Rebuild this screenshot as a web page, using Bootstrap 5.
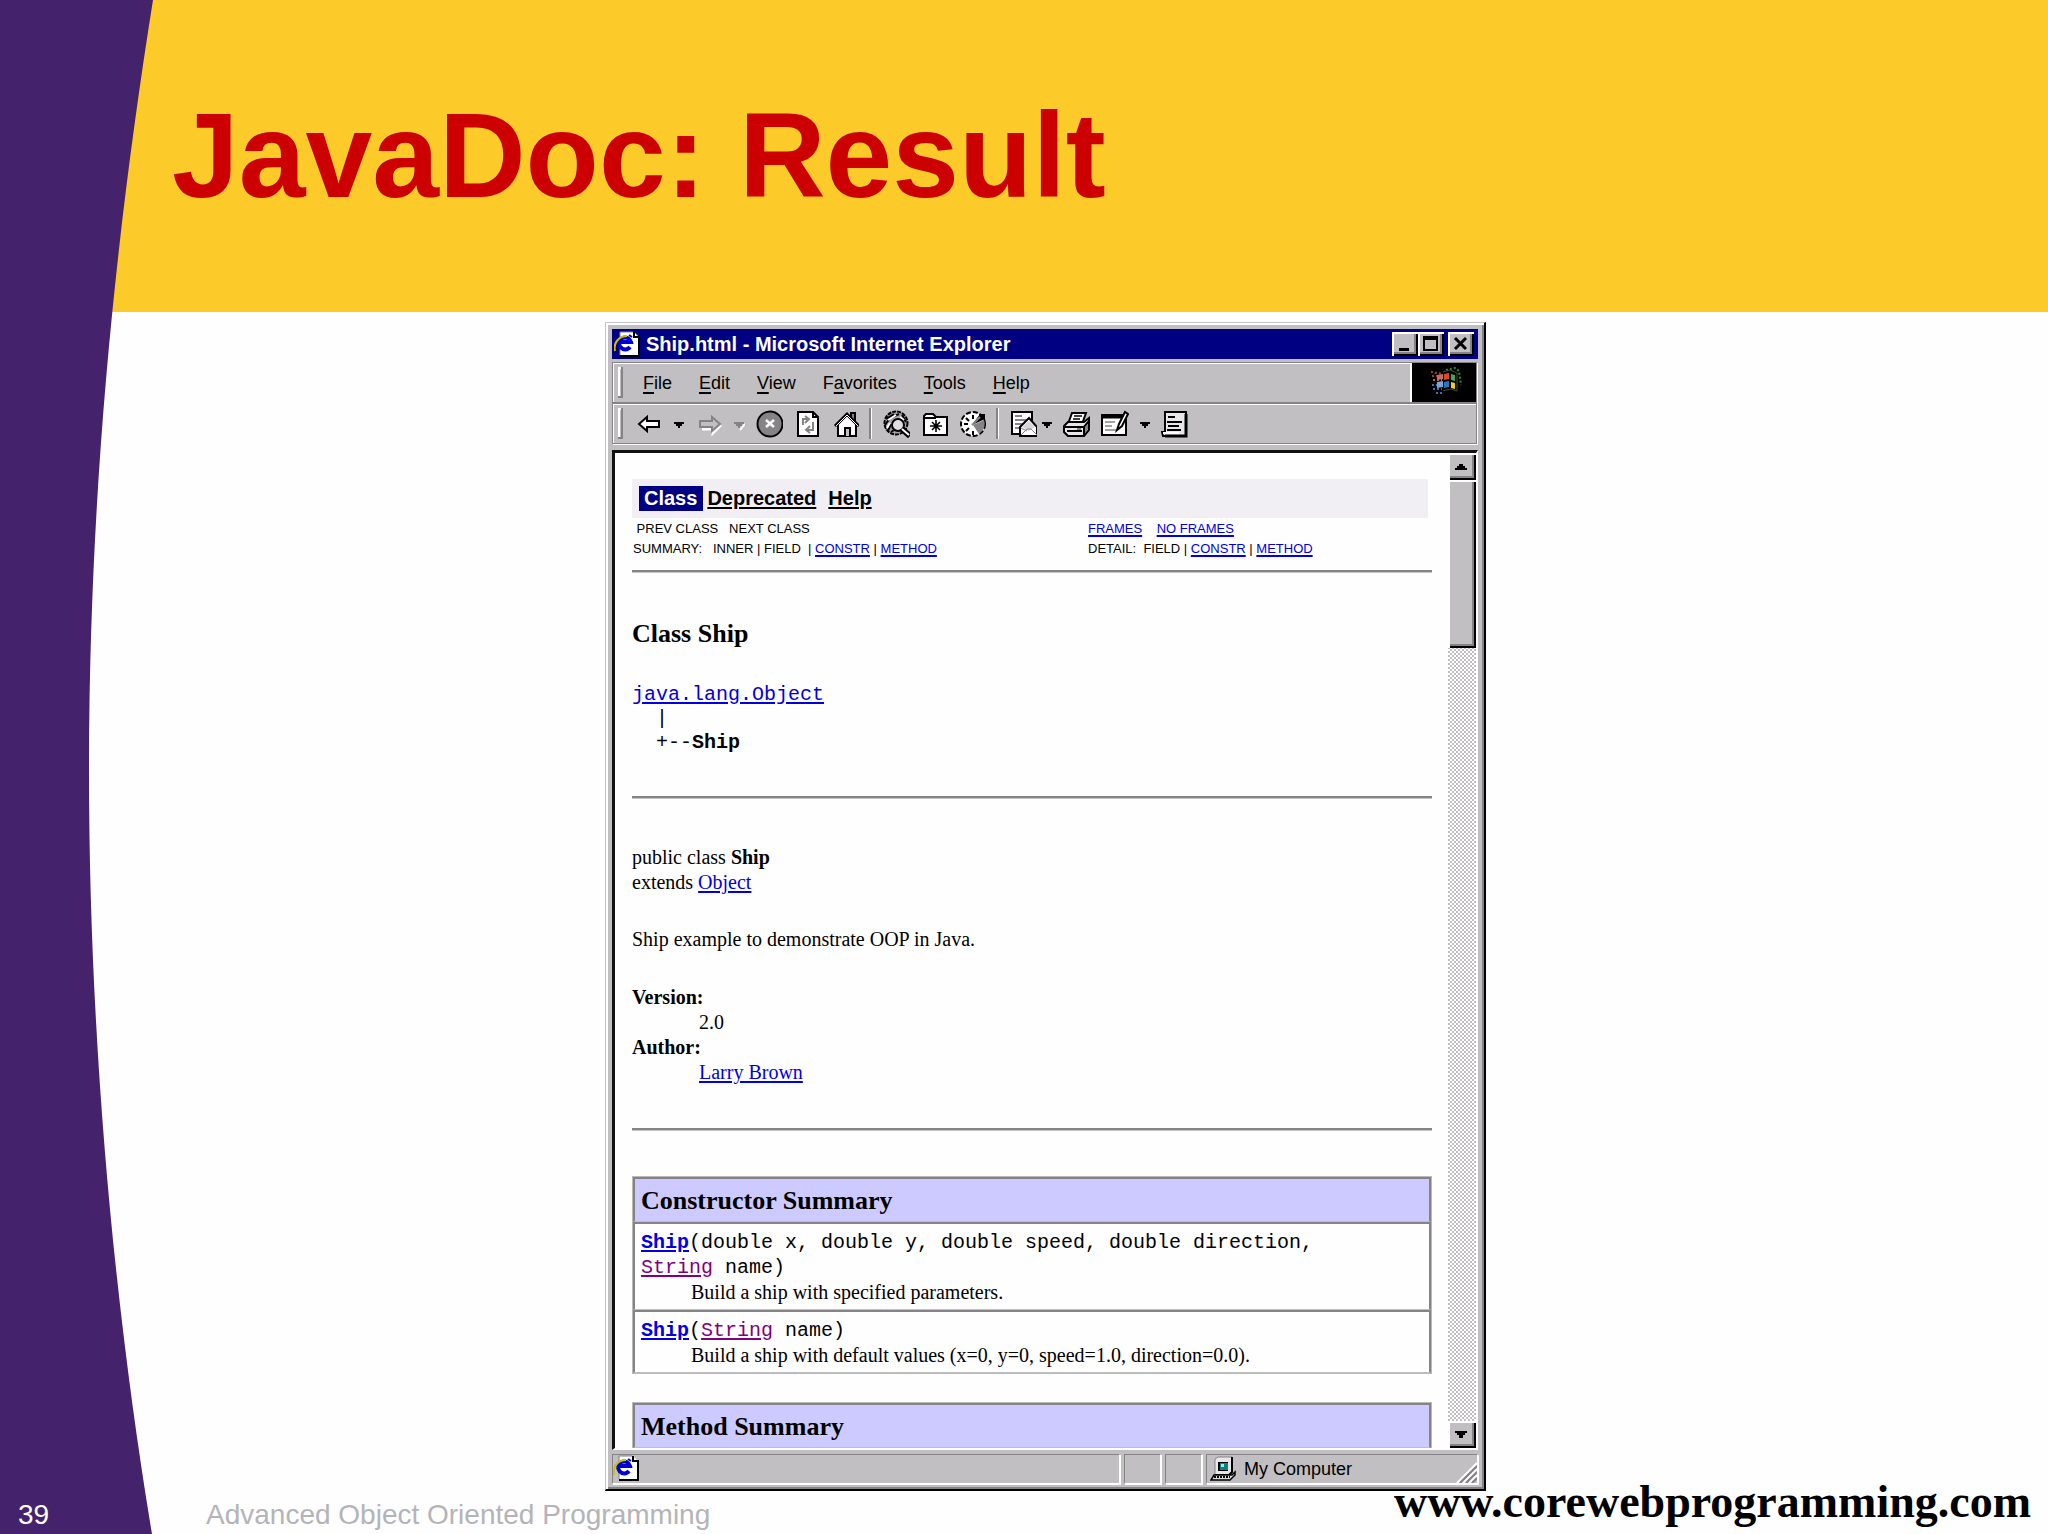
<!DOCTYPE html>
<html lang="en">
<head>
<meta charset="utf-8">
<meta name="viewport" content="width=device-width, initial-scale=1">
<title>JavaDoc: Result</title>
<link href="https://cdn.jsdelivr.net/npm/bootstrap@5.3.0/dist/css/bootstrap.min.css" rel="stylesheet">
<style>
  body { background: #fefefe; color: #000; font-family: "Liberation Sans", Arial, sans-serif; }
  .slide { height: 100vh; min-height: 900px; isolation: isolate; }
  .curve { position: absolute; left: 0; top: 0; width: 153px; height: 100%; z-index: -1; }
  .slide-head { background: #fccb2a; height: 312px; padding: 87px 172px 0; z-index: -2; }
  .slide-head h1 { color: #cc0000; font-size: 120px; line-height: 136px; font-weight: 700; }
  .slide-main { min-height: 0; padding: 10px 0 0 43px; }
  .slide-foot { height: 43px; padding: 0 17px 4px 18px; }
  .slide-no { color: #fff; width: 188px; font-size: 28px; line-height: 30px; }
  .course { color: #b4b4b8; font-size: 28px; line-height: 30px; }
  .site { font: 700 46px/22px "Liberation Serif", "Times New Roman", serif; color: #000; }

  /* window frame */
  .win { width: 100%; max-width: 881px; background: #c1bfc1; border: 1px solid #c4c2c4; border-right: 2px solid #000; border-bottom: 2px solid #000;
         box-shadow: inset 2px 2px #fff, inset -2px -2px #858385; padding: 6px 6px 5px 6px; color: #000; }
  .win-title { background: #000082; color: #fff; height: 30px; padding: 0 4px 0 2px; font-size: 20px; line-height: 30px; font-weight: 700; }
  .win-title span { margin-left: 6px; }
  .bevel { background: #c1bfc1; border: 0; padding: 0; box-shadow: inset 2px 2px #fff, inset -2px -2px #000, inset -4px -4px #858385; color: #000; line-height: 0; }
  .cap-btn { width: 26px; height: 24px; }
  .ie-bar { height: 41px; margin-right: 1px; border: 1px solid #858385; box-shadow: inset 1px 1px #fff, 1px 1px #fff; }
  .grip { width: 5px; height: 31px; margin-left: 5px; border: solid #858385; border-width: 0 2px 2px 0; box-shadow: inset 2px 2px #fff; }
  .menus { gap: 27px; margin-left: 20px; font-size: 18px; line-height: 38px; }
  .menus button, .tools button { background: none; border: 0; padding: 0; color: #000; line-height: inherit; }
  .menus u { text-underline-offset: 3px; text-decoration-thickness: 2px; }
  .tools { gap: 10px; margin-left: 12px; }
  .tools button, .tools svg { display: block; line-height: 0; }
  .divider { width: 3px; height: 31px; border-left: 2px solid #858385; border-right: 1px solid #fff; }

  /* document pane */
  .client { min-height: 0; margin-top: 6px; border: solid #fff; border-width: 3px 2px 2px 3px; border-top-color: #111; border-left-color: #111; background: #fefefe; }
  .doc { min-width: 0; overflow: hidden; padding: 26px 16px 0 17px; font: 20px/25px "Liberation Serif", "Times New Roman", serif; }
  .doc a { color: #0000e0; text-decoration: underline; text-underline-offset: 2px; text-decoration-thickness: 2px; }
  .doc a.seen { color: #800080; }
  .doc-nav { background: #f1eff3; height: 39px; margin-right: 4px; padding: 0 7px; font: 700 20px/25px "Liberation Sans", Arial, sans-serif; }
  .doc-nav a { color: #000; }
  .doc-nav .here { background: #000082; color: #fff; padding: 0 6px 0 5px; margin-right: 4px; }
  .doc-nav .dep { margin-right: 12px; }
  .sub-nav { font: 13px/20px "Liberation Sans", Arial, sans-serif; padding-top: 1px; }
  .sub-nav .side-a { width: 456px; padding-left: 1px; }
  .rule { height: 3px; margin: 0; border: 0; opacity: 1; background: linear-gradient(#858385 2px, #c6c6c6 2px); }
  .doc h2, .sum-table th { font-size: 26px; line-height: 30px; font-weight: 700; }
  .doc h2 { margin: 46px 0 34px; }
  .doc pre { font: 20px/24px "Liberation Mono", "Courier New", monospace; margin: 0 0 41px; overflow: visible; }
  .doc code { display: block; font: 20px/25px "Liberation Mono", "Courier New", monospace; color: #000; }
  .doc dd { margin: 0 0 0 67px; }
  .doc dl { margin: 33px 0 43px; }
  .sum-table { width: 100%; border: 1px solid #b9b9b9; border-collapse: separate; border-spacing: 0; }
  .sum-table th, .sum-table td { border: solid #858385; border-width: 2px 2px 1px 2px; border-bottom-color: #c0c0c0; }
  .sum-table th { background: #cccaff; height: 45px; padding: 2px 6px 0; }
  .sum-table td { padding: 6px 6px 4px; }
  .about { padding-left: 50px; }

  /* scroll bar */
  .scroller { width: 28px; flex: none; background: repeating-conic-gradient(#c1bfc1 0 25%, #fff 0 50%) 0 0 / 4px 4px; }
  .scroller .bevel { width: 28px; height: 27px; }
  .scroller .thumb { height: 168px; }

  /* status bar */
  .status { height: 30px; margin-top: 4px; gap: 4px; font-size: 18px; line-height: 28px; }
  .pane { border: 1px solid #858385; border-right-color: #fff; border-bottom-color: #fff; box-shadow: 1px 1px #fff; }
  .pane-s { width: 37px; }
  .pane-z { width: 272px; padding-left: 3px; }
</style>
<script src="https://cdn.jsdelivr.net/npm/bootstrap@5.3.0/dist/js/bootstrap.bundle.min.js"></script>
</head>
<body>
<svg width="0" height="0" class="position-absolute" aria-hidden="true">
  <symbol id="ie" viewBox="0 0 26 26">
    <path d="M6 1H20L25 6V25H6Z" fill="#fff"/><path d="M20 1V6H25V25H6" fill="none" stroke="#000" stroke-width="2"/>
    <path d="M6 24V1H19" fill="none" stroke="#858385"/>
    <path d="M16 16A6 6 0 1 1 17 11H7" fill="none" stroke="#0000d0" stroke-width="4"/>
    <path d="M1 20C-1 12 5 5 13 5" fill="none" stroke="#c9c200" stroke-width="2"/><path d="M15 4l3 2" stroke="#0000d0" stroke-width="2"/>
  </symbol>
  <symbol id="caret" viewBox="0 0 12 28"><path d="M1 12H11V14H9V16H7V18H5V16H3V14H1Z"/></symbol>
</svg>

<div class="slide position-relative d-flex flex-column overflow-hidden">
  <svg class="curve" viewBox="0 0 153 1534" preserveAspectRatio="none" aria-hidden="true"><path d="M0 0H153C118 220 89 480 89 770S118 1330 152 1534H0Z" fill="#44236c"/></svg>
  <header class="slide-head position-relative flex-shrink-0"><h1 class="m-0">JavaDoc: Result</h1></header>

  <main class="slide-main flex-grow-1 d-flex justify-content-center">
    <section class="win d-flex flex-column" aria-label="Ship.html - Microsoft Internet Explorer">
      <div class="win-title d-flex align-items-center flex-shrink-0">
        <svg width="26" height="26"><use href="#ie"/></svg>
        <span class="me-auto">Ship.html - Microsoft Internet Explorer</span>
        <button class="bevel cap-btn" aria-label="Minimize"><svg width="26" height="24"><path d="M7 16h10v3H7z"/></svg></button>
        <button class="bevel cap-btn me-1" aria-label="Maximize"><svg width="26" height="24"><path d="M6 6H19V18H6Z" fill="none" stroke="#000" stroke-width="2"/><path d="M5 4h15v4H5z"/></svg></button>
        <button class="bevel cap-btn" aria-label="Close"><svg width="26" height="24"><path d="M7 6L18 17M18 6L7 17" stroke="#000" stroke-width="3"/></svg></button>
      </div>

      <nav class="ie-bar d-flex align-items-center flex-shrink-0" style="margin-top:3px">
        <div class="grip"></div>
        <div class="menus d-flex me-auto">
          <button><u>F</u>ile</button><button><u>E</u>dit</button><button><u>V</u>iew</button><button>F<u>a</u>vorites</button><button><u>T</u>ools</button><button><u>H</u>elp</button>
        </div>
        <svg width="66" height="39" viewBox="0 0 66 39" aria-hidden="true">
          <path d="M0 0h2v39H0z" fill="#fff"/><path d="M2 0h64v39H2z"/>
          <g stroke-width="2" stroke-dasharray="2 2" fill="none"><path d="M21 9l12 2M22 13h10" stroke="#a04030"/><path d="M23 17h9" stroke="#c06050"/><path d="M22 22h9M23 26h9M26 30h8" stroke="#3a70b0"/><path d="M36 7l9-2 4 3 2 14" stroke="#2f8a40"/></g>
          <path d="M27 12l6-1v5l-6 1z" fill="#c77060"/><path d="M27 19l6-1v6l-6 1z" fill="#79a8d8"/>
          <path d="M34 11l5-1v6l-5 1z" fill="#d84a28"/><path d="M41 11l4 1v6l-4-1z" fill="#49a548"/>
          <path d="M34 19l5-1v6l-5 1z" fill="#2b74c0"/><path d="M41 19l4 1v6l-4-1z" fill="#f0cc20"/>
          <path d="M33 9l7-2 7 3v18l-6-2-8 2" fill="none" stroke="#3a4a42"/>
        </svg>
      </nav>

      <div class="ie-bar d-flex align-items-center flex-shrink-0">
        <div class="grip"></div>
        <div class="tools d-flex align-items-center">
          <button aria-label="Back"><svg width="28" height="28"><path d="M4 14L12 7V11H24V17H12V21Z" fill="#fff" stroke="#000" stroke-width="2"/></svg></button>
          <button aria-label="Back list"><svg width="12" height="28"><use href="#caret"/></svg></button>
          <button aria-label="Forward"><svg width="28" height="28"><path d="M26 15L18 23V19H7" fill="none" stroke="#fff" stroke-width="3"/><path d="M25 14L17 7V11H5V17H17V21Z" fill="#c1bfc1" stroke="#858385" stroke-width="2"/></svg></button>
          <button aria-label="Forward list"><svg width="12" height="28"><path d="M12 14L7 20" stroke="#fff" stroke-width="2"/><use href="#caret" fill="#858385"/></svg></button>
          <button aria-label="Stop"><svg width="28" height="28"><circle cx="15" cy="14" r="12.5" fill="#858385" stroke="#000" stroke-width="2"/><path d="M11 10L19 17M19 10L11 17" stroke="#fff" stroke-width="2.6"/></svg></button>
          <button aria-label="Refresh"><svg width="28" height="28"><path d="M5 2H20L25 7V26H5Z" fill="#fff" stroke="#000" stroke-width="2"/><path d="M20 2V7H25" fill="none" stroke="#000" stroke-width="2"/><path d="M10 15V9H15M12 6l4 3-4 4M20 12V20H14M17 16l-4 4 4 3" fill="none" stroke="#858385" stroke-width="2"/></svg></button>
          <button aria-label="Home"><svg width="28" height="28"><path d="M20 9V3H24V13" fill="#858385" stroke="#000" stroke-width="2"/><path d="M7 14V26H25V14L16 5Z" fill="#fff" stroke="#000" stroke-width="2"/><path d="M4 16L16 4L28 16" fill="none" stroke="#000" stroke-width="3"/><path d="M5 16L16 5L27 16" fill="none" stroke="#fff"/><path d="M14 26V18H19V26" fill="#c1bfc1" stroke="#000" stroke-width="2"/></svg></button>
          <div class="divider"></div>
          <button aria-label="Search"><svg width="28" height="28"><circle cx="14" cy="13" r="11.5" fill="#a5a3a5" stroke="#000" stroke-width="2" stroke-dasharray="4 1"/><path d="M4 9L12 4M3 15L8 8L17 4M6 21L9 14M20 5L24 12M9 22L12 20" stroke="#000" stroke-width="2" fill="none"/><path d="M6 10L14 5M5 18L8 13M18 7L22 10" stroke="#fff" stroke-width="2"/><circle cx="16" cy="15" r="6" fill="#e0dee0" stroke="#000" stroke-width="2"/><path d="M20 19L28 26" stroke="#000" stroke-width="6"/><path d="M20 19L27 25" stroke="#fff" stroke-width="2"/></svg></button>
          <button aria-label="Favorites"><svg width="28" height="28"><path d="M4 25V6L6 4H13L16 7H27V25Z" fill="#fff" stroke="#000" stroke-width="2"/><path d="M5 8H16" stroke="#000" stroke-width="2"/><path d="M16 10V22M10 16H22M12 12L20 20M20 12L12 20" stroke="#000" stroke-width="1.6"/></svg></button>
          <button aria-label="History"><svg width="28" height="28"><circle cx="15" cy="14" r="12" fill="#fff" stroke="#000" stroke-width="2" stroke-dasharray="5 2"/><path d="M15 15L26 10A12 12 0 0 1 21 24Z" fill="#858385"/><path d="M15 5V9M15 21V25M6 14H10M8 8L11 11M8 21L11 18" stroke="#000" stroke-width="2"/><path d="M14 15L22 4L27 4V9Z"/><path d="M14 15L22 7" stroke="#858385" stroke-width="2"/></svg></button>
          <div class="divider"></div>
          <div class="d-flex gap-1">
            <button aria-label="Mail"><svg width="28" height="28"><path d="M3 2H23V24H3Z" fill="#fff" stroke="#000" stroke-width="2"/><path d="M6 6H13M6 10H19M6 14H16M6 18H12" stroke="#858385" stroke-width="2"/><path d="M11 17L20 8L28 17V26H11Z" fill="#fff" stroke="#000" stroke-width="2"/><path d="M13 17L20 11L26 17L20 21Z" fill="#d8d6d8"/><path d="M12 25L18 19H22L28 25M12 18L18 21" fill="none" stroke="#858385"/></svg></button>
            <button aria-label="Mail list"><svg width="12" height="28"><use href="#caret"/></svg></button>
          </div>
          <button aria-label="Print"><svg width="28" height="28"><path d="M9 3H23L19 14H5Z" fill="#fff" stroke="#000" stroke-width="2"/><path d="M11 6H19M10 9H17" stroke="#000" stroke-width="1.6"/><path d="M1 16L5 12H21L26 8V20L21 26H5L1 22Z" fill="#e8e6e8" stroke="#000" stroke-width="2"/><path d="M1 17H21L26 11M21 17V25M4 21H19" fill="none" stroke="#000" stroke-width="2"/><path d="M22 17L25 14V19L22 23Z" fill="#858385"/><path d="M14 19h4" stroke="#858385" stroke-width="2"/></svg></button>
          <button aria-label="Edit"><svg width="28" height="28"><path d="M1 5H25V25H1Z" fill="#fff" stroke="#000" stroke-width="2"/><path d="M1 7H23" stroke="#000" stroke-width="3"/><path d="M4 12H14M4 16H11M4 20H15" stroke="#858385" stroke-width="1.6"/><path d="M16 20L18 14L24 2L27 4L21 16Z" fill="#fff" stroke="#000" stroke-width="2"/></svg></button>
          <button aria-label="Edit list"><svg width="12" height="28"><use href="#caret"/></svg></button>
          <button aria-label="Discuss"><svg width="28" height="28"><path d="M4 2H25V26H2L1 22H4Z" fill="#e8e6e8" stroke="#000" stroke-width="2"/><path d="M25 4V26H4" fill="none" stroke="#000" stroke-width="3"/><path d="M7 7H14M6 12H21M7 16H18M6 20H20" stroke="#000" stroke-width="2"/><path d="M2 23H18" stroke="#fff" stroke-width="2"/></svg></button>
        </div>
      </div>

      <div class="client d-flex flex-grow-1">
        <article class="doc flex-grow-1">
          <nav class="doc-nav d-flex align-items-center"><span class="here">Class</span><a class="dep" href="#">Deprecated</a><a href="#">Help</a></nav>
          <div class="sub-nav d-flex">
            <div class="side-a"><div>&nbsp;PREV CLASS &nbsp; NEXT CLASS</div><div>SUMMARY: &nbsp; INNER | FIELD &nbsp;| <a href="#">CONSTR</a> | <a href="#">METHOD</a></div></div>
            <div><div><a href="#">FRAMES</a> &nbsp; &nbsp;<a href="#">NO FRAMES</a></div><div>DETAIL: &nbsp;FIELD | <a href="#">CONSTR</a> | <a href="#">METHOD</a></div></div>
          </div>
          <hr class="rule" style="margin-top:11px">
          <h2>Class Ship</h2>
<pre><a href="#">java.lang.Object</a>
  |
  +--<b>Ship</b></pre>
          <hr class="rule">
          <p style="margin:46px 0 32px">public class <b>Ship</b><br>extends <a href="#">Object</a></p>
          <p class="m-0">Ship example to demonstrate OOP in Java.</p>
          <dl><dt>Version:</dt><dd>2.0</dd><dt>Author:</dt><dd><a href="#">Larry Brown</a></dd></dl>
          <hr class="rule">
          <table class="sum-table" style="margin:45px 0 28px">
            <thead><tr><th scope="col">Constructor Summary</th></tr></thead>
            <tbody>
              <tr><td><code><a href="#"><b>Ship</b></a>(double x, double y, double speed, double direction,<br><a class="seen" href="#">String</a> name)</code><div class="about">Build a ship with specified parameters.</div></td></tr>
              <tr><td><code><a href="#"><b>Ship</b></a>(<a class="seen" href="#">String</a> name)</code><div class="about">Build a ship with default values (x=0, y=0, speed=1.0, direction=0.0).</div></td></tr>
            </tbody>
          </table>
          <table class="sum-table"><thead><tr><th scope="col">Method Summary</th></tr></thead></table>
        </article>
        <div class="scroller d-flex flex-column">
          <button class="bevel" aria-label="Scroll up"><svg width="28" height="27"><path d="M7 17V15H9V13H11V11H15V13H17V15H19V17Z"/></svg></button>
          <div class="bevel thumb"></div>
          <button class="bevel mt-auto" aria-label="Scroll down"><svg width="28" height="27"><path d="M7 10V12H9V14H11V17H15V14H17V12H19V10Z"/></svg></button>
        </div>
      </div>

      <footer class="status d-flex flex-shrink-0">
        <div class="pane flex-grow-1"><svg class="d-block" width="26" height="26"><use href="#ie"/></svg></div>
        <div class="pane pane-s"></div>
        <div class="pane pane-s"></div>
        <div class="pane pane-z d-flex">
          <svg width="26" height="28" class="me-2" aria-hidden="true"><path d="M5 4L8 2H22V17L19 20H5Z" fill="#e8e6e8" stroke="#858385"/><path d="M22 2V17L19 20H5" fill="none" stroke="#000" stroke-width="2"/><path d="M8 7H18V16H8Z"/><path d="M10 8h8v7h-8z" fill="#108080"/><path d="M11 9h3v3h-3z" fill="#9ee"/><path d="M1 25L4 20H22L25 17V20L20 25Z" fill="#ddd" stroke="#000" stroke-width="1.5"/><path d="M4 22H20" stroke="#000" stroke-width="2" stroke-dasharray="2 1"/></svg>
          <span class="me-auto">My Computer</span>
          <svg width="21" height="28" aria-hidden="true"><path d="M1 28L21 8M7 28L21 14M13 28L21 20" stroke="#fff" stroke-width="2"/><path d="M4 28L21 11M10 28L21 17M16 28L21 23" stroke="#858385" stroke-width="2"/></svg>
        </div>
      </footer>
    </section>
  </main>

  <footer class="slide-foot d-flex align-items-end flex-shrink-0">
    <span class="slide-no">39</span>
    <span class="course">Advanced Object Oriented Programming</span>
    <span class="site ms-auto align-self-start">www.corewebprogramming.com</span>
  </footer>
</div>
</body>
</html>
